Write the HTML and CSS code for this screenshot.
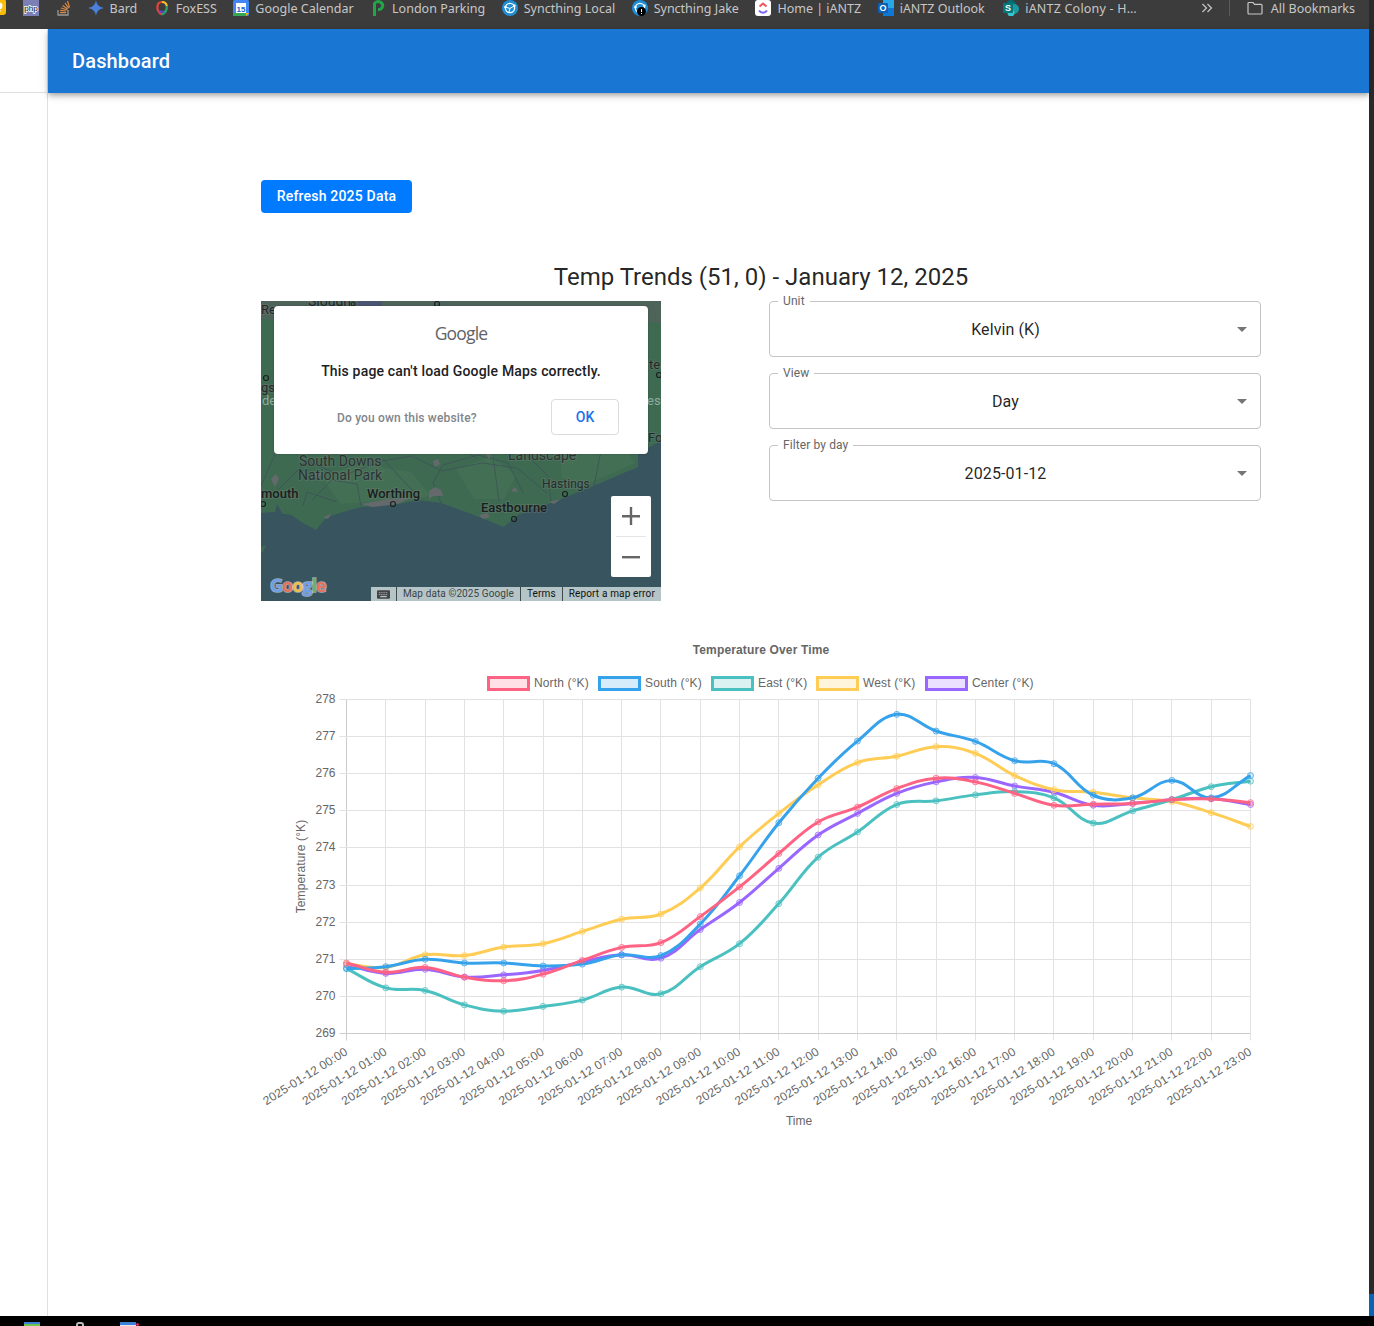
FILE: index.html
```html
<!DOCTYPE html>
<html lang="en">
<head>
  <meta charset="UTF-8">
  <meta name="viewport" content="width=device-width, initial-scale=1.0">
  <title>Dashboard</title>
  <link rel="stylesheet" href="styles.css">
</head>
<body>
  <div class="frame">
    <div class="window">
      <nav class="bookmarks">
        <a class="bm bm-first"><svg class="bm-icon" viewBox="0 0 16 16"><rect width="16" height="16" y="-1" rx="3" fill="#fbbc04"/><circle cx="9" cy="6" r="3.5" fill="#fff"/><rect x="7.5" y="10" width="3" height="2" fill="#fff"/></svg></a>
        <a class="bm"><svg class="bm-icon" viewBox="0 0 16 16"><rect width="16" height="16" fill="#7c7fb5"/><text x="8" y="11" class="php-text">php</text></svg></a>
        <a class="bm bm-stack"><svg class="bm-icon" viewBox="0 0 14 16"><path d="M1 10v5h10v-5" fill="none" stroke="#999" stroke-width="1.300"/><path d="M3 12.600h6M3.200 10.400l6 .6M4 8l6 1.800M5.600 5.500l5.200 3.400M8 3l3.600 5M10.500 1l2 6.500" fill="none" stroke="#d98a45" stroke-width="1.200"/></svg></a>
        <a class="bm"><svg class="bm-icon" viewBox="0 0 16 16"><path d="M8 0C8.700 4.600 11 7.200 16 8 11 8.800 8.700 11.400 8 16 7.300 11.400 5 8.800 0 8 5 7.200 7.300 4.600 8 0z" fill="#4a7fdc"/></svg><span>Bard</span></a>
        <a class="bm"><svg class="bm-icon" viewBox="0 0 16 16"><path d="M8 14.500C4 12.500 3 9 3.500 6A4.800 4.800 0 0 1 8 2" fill="none" stroke="#e8443a" stroke-width="2.200"/><path d="M8 2a4.800 4.800 0 0 1 4.800 4" fill="none" stroke="#f5c02a" stroke-width="2.200"/><path d="M12.800 6c.3 3-1 6.500-4.800 8.500" fill="none" stroke="#2f9e6b" stroke-width="2.200"/><path d="M5 10.500a4 4 0 0 0 5 1" fill="none" stroke="#5a48c8" stroke-width="2"/></svg><span>FoxESS</span></a>
        <a class="bm"><svg class="bm-icon" viewBox="0 0 16 16"><rect width="16" height="16" rx="1.500" fill="#4285f4"/><rect x="3" y="3" width="10" height="10" fill="#fff"/><rect y="13" width="13" height="3" fill="#34a853"/><path d="M13 13h3l-3 3z" fill="#fbbc04"/><text x="8" y="11.500" class="cal-text">15</text></svg><span>Google Calendar</span></a>
        <a class="bm"><svg class="bm-icon" viewBox="0 0 16 16"><path d="M4.500 16V3.500A4.600 4.600 0 0 1 12.800 5.600 4.400 4.400 0 0 1 8 9.600" fill="none" stroke="#22a547" stroke-width="3"/></svg><span>London Parking</span></a>
        <a class="bm"><svg class="bm-icon" viewBox="0 0 16 16"><circle cx="8" cy="8" r="8" fill="#1f8ed6"/><circle cx="8" cy="8" r="4.600" fill="none" stroke="#fff" stroke-width="1.300"/><path d="M3 7l5 1.400 4.400-2.600M8 8.400L7 12" stroke="#fff" fill="none"/><circle cx="3.400" cy="7" r="1.300" fill="#fff"/><circle cx="12.400" cy="5.800" r="1.300" fill="#fff"/></svg><span>Syncthing Local</span></a>
        <a class="bm"><svg class="bm-icon" viewBox="0 0 16 16"><circle cx="8" cy="8" r="8" fill="#1f8ed6"/><circle cx="8" cy="8" r="4.600" fill="none" stroke="#fff" stroke-width="1.300"/><circle cx="3.400" cy="7" r="1.300" fill="#fff"/><circle cx="12.400" cy="5.800" r="1.300" fill="#fff"/><circle cx="9.500" cy="11.500" r="4.500" fill="#000"/><path d="M9.500 9v3M9.500 13v1" stroke="#fff"/></svg><span>Syncthing Jake</span></a>
        <a class="bm"><svg class="bm-icon" viewBox="0 0 16 16"><rect width="16" height="16" rx="3" fill="#fff"/><path d="M4.500 6.500L8 3.500l3.500 3" fill="none" stroke="#f2545b" stroke-width="2"/><path d="M4 10.500c2 3 6 3 8 0" fill="none" stroke="#7b68ee" stroke-width="2"/></svg><span>Home | iANTZ</span></a>
        <a class="bm"><svg class="bm-icon" viewBox="0 0 16 16"><rect x="5" width="11" height="16" fill="#28a8ea"/><rect x="5" y="8" width="11" height="8" fill="#0f78d4"/><rect y="3" width="10" height="10" rx="1" fill="#0f5fb5"/><text x="5" y="11" class="app-text">O</text></svg><span>iANTZ Outlook</span></a>
        <a class="bm bm-last"><svg class="bm-icon" viewBox="0 0 16 16"><circle cx="8" cy="5" r="5" fill="#036c70"/><circle cx="11" cy="9" r="5" fill="#1a9ba1"/><circle cx="8" cy="13" r="3.500" fill="#37c6d0"/><rect y="3" width="10" height="10" rx="1" fill="#03787c"/><text x="5" y="11" class="app-text">S</text></svg><span>iANTZ Colony - H…</span></a>
        <a class="bm bm-more"><svg class="bm-chevrons" viewBox="0 0 12 10"><path d="M1.500 1l4 4-4 4M6.500 1l4 4-4 4" fill="none" stroke="#c7c7c7" stroke-width="1.200"/></svg></a>
        <span class="bm-sep"></span>
        <a class="bm bm-all"><svg class="bm-icon" viewBox="0 0 16 16"><path d="M1 3.500a1 1 0 0 1 1-1h4l1.600 1.800H14a1 1 0 0 1 1 1V13a1 1 0 0 1-1 1H2a1 1 0 0 1-1-1z" fill="none" stroke="#c7c7c7" stroke-width="1.200"/></svg><span>All Bookmarks</span></a>
      </nav>

      <div class="app">
        <aside class="sidebar"><div class="sidebar-head"></div></aside>
        <div class="page">
          <header class="appbar"><h1>Dashboard</h1></header>
          <main class="content">
            <button class="refresh-button">Refresh 2025 Data</button>
            <h2 class="trend-title">Temp Trends (51, 0) - January 12, 2025</h2>

            <div class="top-row">
              <div class="map">
                <svg class="map-base" viewBox="0 0 400 300">
                  <rect width="400" height="300" fill="#3e6a52"/>
                  <path d="M0 0h400v22l-60-6-90 4-110-8-80 10-60-4z" fill="#5b5f63" opacity=".55"/>
                  <path d="M60 175l40-12 50 8 20 24-40 4-50 4zM195 168l35-12 25 18-12 24-30 0zM300 150l60-8 14 20-50 22-24-8z" fill="#477559" opacity=".6"/>
                  <path d="M0 212l12-1 18 3 12 8 13 7 9-11 8-4 28-8 33-2 24-5 23 3 33 12 30 12 14-12 33-12 40-16 47-20v-14l23-12v160H0z" fill="#37545f"/>
                  <path d="M0 246l5-2-3 7-2 1z" fill="#3e6a52"/>
                  <path d="M14 212l2-9 5 9z" fill="#37545f"/>
                  <path d="M0 185l14-32M16 190l30-30 35 15 40-15 30-5 30 15 40-8 35 5 30 25M180 202l-8-20 10-18 35-10 30 8 15 30M217 158l-13-8 35-30 25 25 40 5 30-10M290 200l-3-25-25-25M100 205l-4-22-25-4-20 20M42 205l4-14 30 10M122 158l30 32M232 156l6 44M340 150l-8 40" fill="none" stroke="#3d5058" stroke-width=".8"/>
                  <path d="M10 178l5-5 3 5-4 8zM52 172l5-2 4 4-5 4zM168 190l6-4 6 3 2 6-10 0-4 3zM100 203l28-5 22-1-14 6-24 3zM172 160l5-2 2 5-5 3zM224 152l6 0-2 6zM250 190l4-4 3 5zM288 201l12-3-7 5zM62 216l8-3-3 5zM218 214l8-2 3 4-7 2z" fill="#66696c"/>
                  <rect x="97" y="0" width="24" height="7" fill="#4a5078" opacity=".8"/>
                  <circle cx="92" cy="3" r="2" class="map-dot"/>
                  <text x="0" y="13" class="map-label">Re</text>
                  <text x="47" y="5" class="map-label map-big">Slough</text>
                  <circle cx="176" cy="3" r="2.500" class="map-dot"/>
                  <circle cx="5" cy="77" r="2.500" class="map-dot"/>
                  <circle cx="398" cy="74" r="2.500" class="map-dot"/>
                  <text x="0" y="91" class="map-label">gs</text>
                  <text x="1" y="104" class="map-label map-pale">de</text>
                  <text x="388" y="68" class="map-label">te</text>
                  <text x="386" y="104" class="map-label map-pale">es</text>
                  <text x="387" y="141" class="map-label">Fo</text>
                  <text x="38" y="165" class="map-label map-soft">South Downs</text>
                  <text x="37" y="179" class="map-label map-soft">National Park</text>
                  <text x="247" y="159" class="map-label map-soft">Landscape</text>
                  <text x="0" y="197" class="map-label map-town">mouth</text>
                  <text x="106" y="197" class="map-label map-town">Worthing</text>
                  <text x="281" y="187" class="map-label map-small">Hastings</text>
                  <text x="220" y="211" class="map-label map-town">Eastbourne</text>
                  <circle cx="132" cy="203" r="2.500" class="map-dot"/>
                  <circle cx="304" cy="193" r="2.500" class="map-dot"/>
                  <circle cx="253" cy="218" r="2.500" class="map-dot"/>
                  <circle cx="2" cy="203" r="2.500" class="map-dot"/>
                </svg>

                <div class="map-dialog">
                  <div class="map-dialog-logo">Google</div>
                  <div class="map-dialog-msg">This page can't load Google Maps correctly.</div>
                  <div class="map-dialog-foot">
                    <span class="map-dialog-own">Do you own this website?</span>
                    <button class="map-dialog-ok">OK</button>
                  </div>
                </div>

                <div class="zoom-ctl">
                  <div class="zoom-btn"><svg viewBox="0 0 18 18"><path d="M0 8h7.800V0h2.400v8H18v2.400h-7.800V18H7.800v-7.600H0z" fill="#666"/></svg></div>
                  <span class="zoom-line"></span>
                  <div class="zoom-btn"><svg viewBox="0 0 18 18"><rect y="8" width="18" height="2.400" fill="#666"/></svg></div>
                </div>

                <svg class="map-logo" viewBox="0 0 70 26"><text y="17" class="map-logo-text"><tspan fill="#6f9fe8">G</tspan><tspan fill="#e8705f">o</tspan><tspan fill="#eec04f">o</tspan><tspan fill="#6f9fe8">g</tspan><tspan fill="#67b06f">l</tspan><tspan fill="#e8705f">e</tspan></text></svg>

                <div class="map-foot">
                  <span class="map-foot-item map-foot-keys"><svg viewBox="0 0 14 9"><rect width="14" height="9" rx="1" fill="#444"/><path d="M2 2.500h10M2 4.500h10" stroke="#b9c7c9" stroke-dasharray="1 1"/><rect x="3.500" y="6" width="7" height="1.400" fill="#b9c7c9"/></svg></span>
                  <span class="map-foot-item">Map data ©2025 Google</span>
                  <span class="map-foot-item map-foot-dark">Terms</span>
                  <span class="map-foot-item map-foot-dark map-foot-report">Report a map error</span>
                </div>
              </div>

              <div class="filters">
                <div class="select-box">
                  <span class="select-label">Unit</span>
                  <span class="select-value">Kelvin (K)</span>
                  <span class="select-arrow"></span>
                </div>
                <div class="select-box">
                  <span class="select-label">View</span>
                  <span class="select-value">Day</span>
                  <span class="select-arrow"></span>
                </div>
                <div class="select-box">
                  <span class="select-label">Filter by day</span>
                  <span class="select-value">2025-01-12</span>
                  <span class="select-arrow"></span>
                </div>
              </div>
            </div>

            <svg id="tempChart" class="chart" viewBox="0 0 1000 500"></svg>
          </main>
        </div>
      </div>
    </div>
    <div class="edge-strip"><div class="edge-blue"></div></div>
  </div>

  <footer class="taskbar">
    <span class="task task-green"></span>
    <span class="task task-handle"></span>
    <span class="task task-mail"></span>
    <span class="task-dot"></span>
  </footer>

  <script src="chart.js"></script>
</body>
</html>
```

FILE: styles.css
```css
* {
  box-sizing: border-box;
}

html, body {
  margin: 0;
  height: 1326px;
  overflow: hidden;
}

body {
  font-family: Roboto, Arial, sans-serif;
  background-color: #000;
  display: flex;
  flex-direction: column;
}

.frame {
  flex: 1;
  display: flex;
  min-height: 0;
}

.window {
  flex: 1;
  display: flex;
  flex-direction: column;
  min-width: 0;
  background-color: #fff;
}

.edge-strip {
  width: 5px;
  background-color: #2a2a2a;
  display: flex;
  flex-direction: column;
  justify-content: flex-end;
}

.edge-blue {
  height: 22px;
  background-color: #0a62b0;
}

/* bookmarks bar */
.bookmarks {
  height: 29px;
  flex-shrink: 0;
  background-color: #3c3c3c;
  display: flex;
  align-items: flex-start;
  gap: 16.5px;
  overflow: hidden;
  color: #c7c7c7;
  font-family: "Noto Sans", sans-serif;
  font-size: 12.5px;
  line-height: 17px;
  white-space: nowrap;
}

.bm {
  display: flex;
  align-items: center;
  gap: 6px;
  height: 16px;
}

.bm-first {
  margin-left: -10px;
}

.bm-icon {
  width: 16px;
  height: 16px;
  flex-shrink: 0;
}

.bm-stack {
  margin-left: 2px;
}

.bm-stack .bm-icon {
  width: 14px;
}

.bm-last {
  width: 134px;
  margin-left: 2px;
  letter-spacing: 0.2px;
}

.bm-more {
  margin-left: auto;
}

.bm-chevrons {
  width: 12px;
  height: 10px;
}

.bm-sep {
  width: 1px;
  height: 16px;
  background-color: #5c5c5c;
}

.bm-all {
  gap: 8px;
  margin-right: 14px;
}

.php-text, .cal-text, .app-text {
  text-anchor: middle;
  font-family: "Liberation Sans", sans-serif;
}

.php-text {
  font-size: 8px;
  fill: #000;
  stroke: #fff;
  stroke-width: 1.5px;
  paint-order: stroke;
}

.cal-text {
  font-size: 8px;
  font-weight: 700;
  fill: #1a5fc9;
}

.app-text {
  font-size: 9px;
  font-weight: 700;
  fill: #fff;
}

/* shell */
.app {
  flex: 1;
  display: flex;
  min-height: 0;
}

.sidebar {
  width: 48px;
  flex-shrink: 0;
  border-right: 1px solid #e0e0e0;
}

.sidebar-head {
  height: 64px;
  border-bottom: 1px solid #e0e0e0;
}

.page {
  flex: 1;
  min-width: 0;
}

.appbar {
  height: 64px;
  background-color: #1976d2;
  color: #fff;
  padding-left: 24px;
  display: flex;
  align-items: center;
  box-shadow: 0 2px 4px -1px rgba(0,0,0,0.2), 0 4px 5px 0 rgba(0,0,0,0.14), 0 1px 10px 0 rgba(0,0,0,0.12);
  position: relative;
}

.appbar h1 {
  margin: 0;
  font-size: 20px;
  font-weight: 500;
  letter-spacing: 0.15px;
}

.content {
  width: 1000px;
  margin-left: 213px;
  padding-top: 87px;
}

.refresh-button {
  display: block;
  height: 33px;
  width: 151px;
  padding: 0 0 2px;
  border: none;
  border-radius: 4px;
  background-color: #007bff;
  color: #fff;
  font-family: inherit;
  font-size: 14px;
  font-weight: 500;
  letter-spacing: 0.2px;
}

.trend-title {
  margin: 50px 0 9px;
  height: 29px;
  font-size: 24px;
  font-weight: 400;
  line-height: 29px;
  text-align: center;
  color: rgba(0,0,0,0.87);
}

.top-row {
  display: flex;
  justify-content: space-between;
  align-items: flex-start;
}

/* map */
.map {
  position: relative;
  width: 400px;
  height: 300px;
  overflow: hidden;
}

.map-base {
  display: block;
  width: 400px;
  height: 300px;
}

.map-label {
  font-family: Roboto, sans-serif;
  font-size: 13px;
  fill: #23282a;
  stroke: rgba(120,130,125,0.35);
  stroke-width: 2px;
  paint-order: stroke;
}

.map-big {
  font-size: 14px;
}

.map-soft {
  font-size: 14px;
  fill: #2b3332;
}

.map-town {
  font-weight: 500;
  font-size: 13px;
  fill: #1a1d1d;
}

.map-small {
  font-size: 12px;
  fill: #262c2c;
}

.map-pale {
  fill: #93ab9f;
  stroke: none;
}

.map-dot {
  fill: none;
  stroke: #1d2020;
  stroke-width: 1.2;
}

.map-dialog {
  position: absolute;
  left: 13px;
  top: 5px;
  width: 374px;
  height: 148px;
  background-color: #fff;
  border-radius: 4px;
  box-shadow: 0 0 2px rgba(0,0,0,0.3);
  padding-top: 15px;
  text-align: center;
}

.map-dialog-logo {
  font-family: "Open Sans", sans-serif;
  font-size: 17.5px;
  line-height: 24px;
  letter-spacing: -0.8px;
  color: #5f6368;
}

.map-dialog-msg {
  margin-top: 16px;
  font-size: 14px;
  font-weight: 500;
  letter-spacing: 0.18px;
  line-height: 20px;
  color: #202124;
}

.map-dialog-foot {
  display: flex;
  align-items: center;
  margin-top: 18px;
  padding-left: 63px;
}

.map-dialog-own {
  width: 214px;
  margin-top: 2px;
  text-align: left;
  font-size: 12px;
  font-weight: 500;
  letter-spacing: 0.17px;
  color: #80868b;
}

.map-dialog-ok {
  width: 68px;
  height: 36px;
  padding: 0;
  background-color: #fff;
  border: 1px solid #dadce0;
  border-radius: 4px;
  font-family: inherit;
  font-size: 14px;
  font-weight: 500;
  color: #1a73e8;
}

.zoom-ctl {
  position: absolute;
  left: 350px;
  top: 195px;
  width: 40px;
  height: 81px;
  background-color: #fff;
  border-radius: 2px;
  display: flex;
  flex-direction: column;
  align-items: center;
}

.zoom-btn {
  width: 40px;
  height: 40px;
  display: flex;
  align-items: center;
  justify-content: center;
}

.zoom-btn svg {
  width: 18px;
  height: 18px;
}

.zoom-line {
  width: 30px;
  height: 1px;
  background-color: #e6e6e6;
}

.map-logo {
  position: absolute;
  left: 9px;
  top: 274px;
  width: 70px;
  height: 26px;
}

.map-logo-text {
  font-family: "Open Sans", sans-serif;
  font-size: 18px;
  font-weight: 700;
  letter-spacing: -1px;
  stroke: rgba(255,255,255,0.5);
  stroke-width: 1.5px;
  paint-order: stroke;
}

.map-foot {
  position: absolute;
  right: 0;
  bottom: 0;
  height: 14px;
  display: flex;
  background-color: #b5c4c6;
  font-size: 10px;
  letter-spacing: 0.1px;
  line-height: 14px;
  color: #3b4446;
}

.map-foot-item {
  padding: 0 6px;
  border-left: 1px solid #3f4a4c;
}

.map-foot-item:first-child {
  border-left: none;
}

.map-foot-keys {
  display: flex;
  align-items: center;
  width: 25px;
}

.map-foot-keys svg {
  width: 14px;
  height: 9px;
}

.map-foot-dark {
  color: #111;
}

.map-foot-report {
  letter-spacing: 0.16px;
}

/* filters */
.filters {
  width: 492px;
  display: flex;
  flex-direction: column;
  gap: 16px;
}

.select-box {
  position: relative;
  height: 56px;
  border: 1px solid #c4c4c4;
  border-radius: 4px;
  padding: 0 32px 0 13px;
  display: flex;
  align-items: center;
  justify-content: center;
}

.select-label {
  position: absolute;
  left: 8px;
  top: -8px;
  padding: 0 5px;
  background-color: #fff;
  font-size: 12px;
  letter-spacing: 0.1px;
  line-height: 14px;
  color: #666;
}

.select-value {
  font-size: 16px;
  letter-spacing: 0.1px;
  color: rgba(0,0,0,0.87);
}

.select-arrow {
  position: absolute;
  right: 13px;
  top: 25px;
  width: 0;
  height: 0;
  border-left: 5px solid transparent;
  border-right: 5px solid transparent;
  border-top: 5px solid #757575;
}

/* chart */
.chart {
  display: block;
  width: 1000px;
  height: 500px;
  margin-top: 39px;
  font-family: "Liberation Sans", Arial, sans-serif;
  font-size: 12px;
}

.chart-text {
  fill: #666;
}

.chart-wide {
  letter-spacing: 0.14px;
}

.chart-title {
  font-weight: 700;
  text-anchor: middle;
}

.chart-grid {
  stroke: #e2e2e2;
  stroke-width: 1;
}

.chart-axis {
  stroke: #ccc;
  stroke-width: 1;
}

/* taskbar */
.taskbar {
  height: 10px;
  flex-shrink: 0;
  display: flex;
  align-items: flex-start;
  padding-top: 6px;
  overflow: hidden;
  background-color: #000;
}

.task {
  display: block;
  height: 4px;
}

.task-green {
  width: 16px;
  margin-left: 24px;
  border-top: 2px solid #3b7fd6;
  background-color: #6fc24a;
}

.task-handle {
  width: 8px;
  margin-left: 36px;
  border: 2px solid #bbb;
  border-bottom: none;
  border-radius: 3px 3px 0 0;
}

.task-mail {
  width: 16px;
  margin-left: 36px;
  border-top: 3px solid #3b7fd6;
  background-color: #e8e8e8;
}

.task-dot {
  width: 3px;
  height: 3px;
  margin-top: 1px;
  border-radius: 50%;
  background-color: #e91e63;
}
```

FILE: chart.js
```js
// Temperature chart, drawn as svg
const svgNs = 'http://www.w3.org/2000/svg';
const chart = document.getElementById('tempChart');

const hours = [];
for (let h = 0; h < 24; h++) {
  hours.push('2025-01-12 ' + String(h).padStart(2, '0') + ':00');
}

const series = [
  { name: 'North (°K)', color: '255,99,132', legendX: 226, values: [270.9,270.65,270.78,270.52,270.42,270.6,270.97,271.32,271.45,272.15,272.95,273.85,274.7,275.1,275.6,275.88,275.78,275.47,275.15,275.18,275.2,275.3,275.32,275.22] },
  { name: 'South (°K)', color: '54,162,235', legendX: 337, values: [270.75,270.8,271.0,270.9,270.9,270.82,270.87,271.12,271.1,271.95,273.25,274.68,275.88,276.88,277.6,277.15,276.87,276.35,276.27,275.42,275.35,275.82,275.35,275.95] },
  { name: 'East (°K)', color: '75,192,192', legendX: 450, values: [270.75,270.23,270.16,269.77,269.6,269.73,269.9,270.25,270.07,270.8,271.42,272.5,273.75,274.43,275.17,275.27,275.43,275.52,275.35,274.67,275,275.3,275.65,275.8] },
  { name: 'West (°K)', color: '255,205,86', legendX: 555, values: [270.87,270.78,271.12,271.1,271.33,271.42,271.75,272.08,272.22,272.92,274.03,274.93,275.7,276.3,276.47,276.73,276.55,275.95,275.57,275.5,275.35,275.25,274.95,274.58] },
  { name: 'Center (°K)', color: '153,102,255', legendX: 664, values: [270.85,270.62,270.73,270.52,270.58,270.7,270.93,271.12,271.03,271.8,272.53,273.45,274.35,274.93,275.47,275.78,275.9,275.67,275.5,275.15,275.2,275.3,275.33,275.17] }
];

// plot area inside the svg
const plotLeft = 85.5;
const plotRight = 989.5;
const plotTop = 59.5;
const plotBottom = 393.5;
const stepX = (plotRight - plotLeft) / 23;
const stepY = (plotBottom - plotTop) / 9;

function add(tag, attrs, text) {
  const el = document.createElementNS(svgNs, tag);
  Object.keys(attrs).forEach(key => el.setAttribute(key, attrs[key]));
  if (text) el.textContent = text;
  chart.appendChild(el);
  return el;
}

function xAt(i) {
  return plotLeft + stepX * i;
}

function yAt(value) {
  return plotTop + (278 - value) * stepY;
}

function drawGrid() {
  for (let i = 0; i < 24; i++) {
    const x = Math.round(xAt(i) - 0.5) + 0.5;
    add('line', { x1: x, x2: x, y1: plotTop, y2: plotBottom + 7, class: i === 0 ? 'chart-axis' : 'chart-grid' });
    const tx = xAt(i) + 2;
    add('text', { class: 'chart-text chart-wide', 'text-anchor': 'end', transform: `translate(${tx} ${plotBottom + 20.5}) rotate(-32)` }, hours[i]);
  }
  for (let v = 0; v < 10; v++) {
    const y = Math.round(plotTop + stepY * v - 0.5) + 0.5;
    add('line', { x1: plotLeft - 7, x2: plotRight, y1: y, y2: y, class: v === 9 ? 'chart-axis' : 'chart-grid' });
    add('text', { class: 'chart-text', 'text-anchor': 'end', x: plotLeft - 11, y: y + 3 }, String(278 - v));
  }
}

function drawLabels() {
  add('text', { class: 'chart-text chart-title chart-wide', x: 500, y: 14 }, 'Temperature Over Time');
  add('text', { class: 'chart-text', 'text-anchor': 'middle', x: 538, y: 485 }, 'Time');
  add('text', { class: 'chart-text chart-wide', 'text-anchor': 'middle', transform: 'translate(44 226.5) rotate(-90)' }, 'Temperature (°K)');

  series.forEach(s => {
    add('rect', { x: s.legendX + 1.5, y: 37.5, width: 40, height: 12, fill: `rgba(${s.color},0.2)`, stroke: `rgb(${s.color})`, 'stroke-width': 3 });
    add('text', { class: 'chart-text chart-wide', x: s.legendX + 47, y: 47 }, s.name);
  });
}

// same control points as a line chart with tension 0.4
function linePath(points) {
  let d = `M${points[0].x} ${points[0].y}`;
  const tension = 0.4;
  const ctrl = points.map((p, i) => {
    const a = points[Math.max(i - 1, 0)];
    const b = points[Math.min(i + 1, points.length - 1)];
    const d1 = Math.hypot(p.x - a.x, p.y - a.y);
    const d2 = Math.hypot(b.x - p.x, b.y - p.y);
    const total = d1 + d2 || 1;
    const fa = tension * d1 / total;
    const fb = tension * d2 / total;
    return {
      px: p.x - fa * (b.x - a.x),
      py: p.y - fa * (b.y - a.y),
      nx: p.x + fb * (b.x - a.x),
      ny: p.y + fb * (b.y - a.y)
    };
  });
  for (let i = 1; i < points.length; i++) {
    d += `C${ctrl[i - 1].nx.toFixed(2)} ${ctrl[i - 1].ny.toFixed(2)} ${ctrl[i].px.toFixed(2)} ${ctrl[i].py.toFixed(2)} ${points[i].x.toFixed(2)} ${points[i].y.toFixed(2)}`;
  }
  return d;
}

function drawSeries() {
  // first series ends up on top
  series.slice().reverse().forEach(s => {
    const points = s.values.map((v, i) => ({ x: xAt(i), y: yAt(v) }));
    add('path', { d: linePath(points), fill: 'none', stroke: `rgb(${s.color})`, 'stroke-width': 3 });
    points.forEach(p => {
      add('circle', { cx: p.x, cy: p.y, r: 3, fill: `rgba(${s.color},0.2)`, stroke: `rgba(${s.color},0.75)`, 'stroke-width': 1 });
    });
  });
}

drawGrid();
drawLabels();
drawSeries();
```
